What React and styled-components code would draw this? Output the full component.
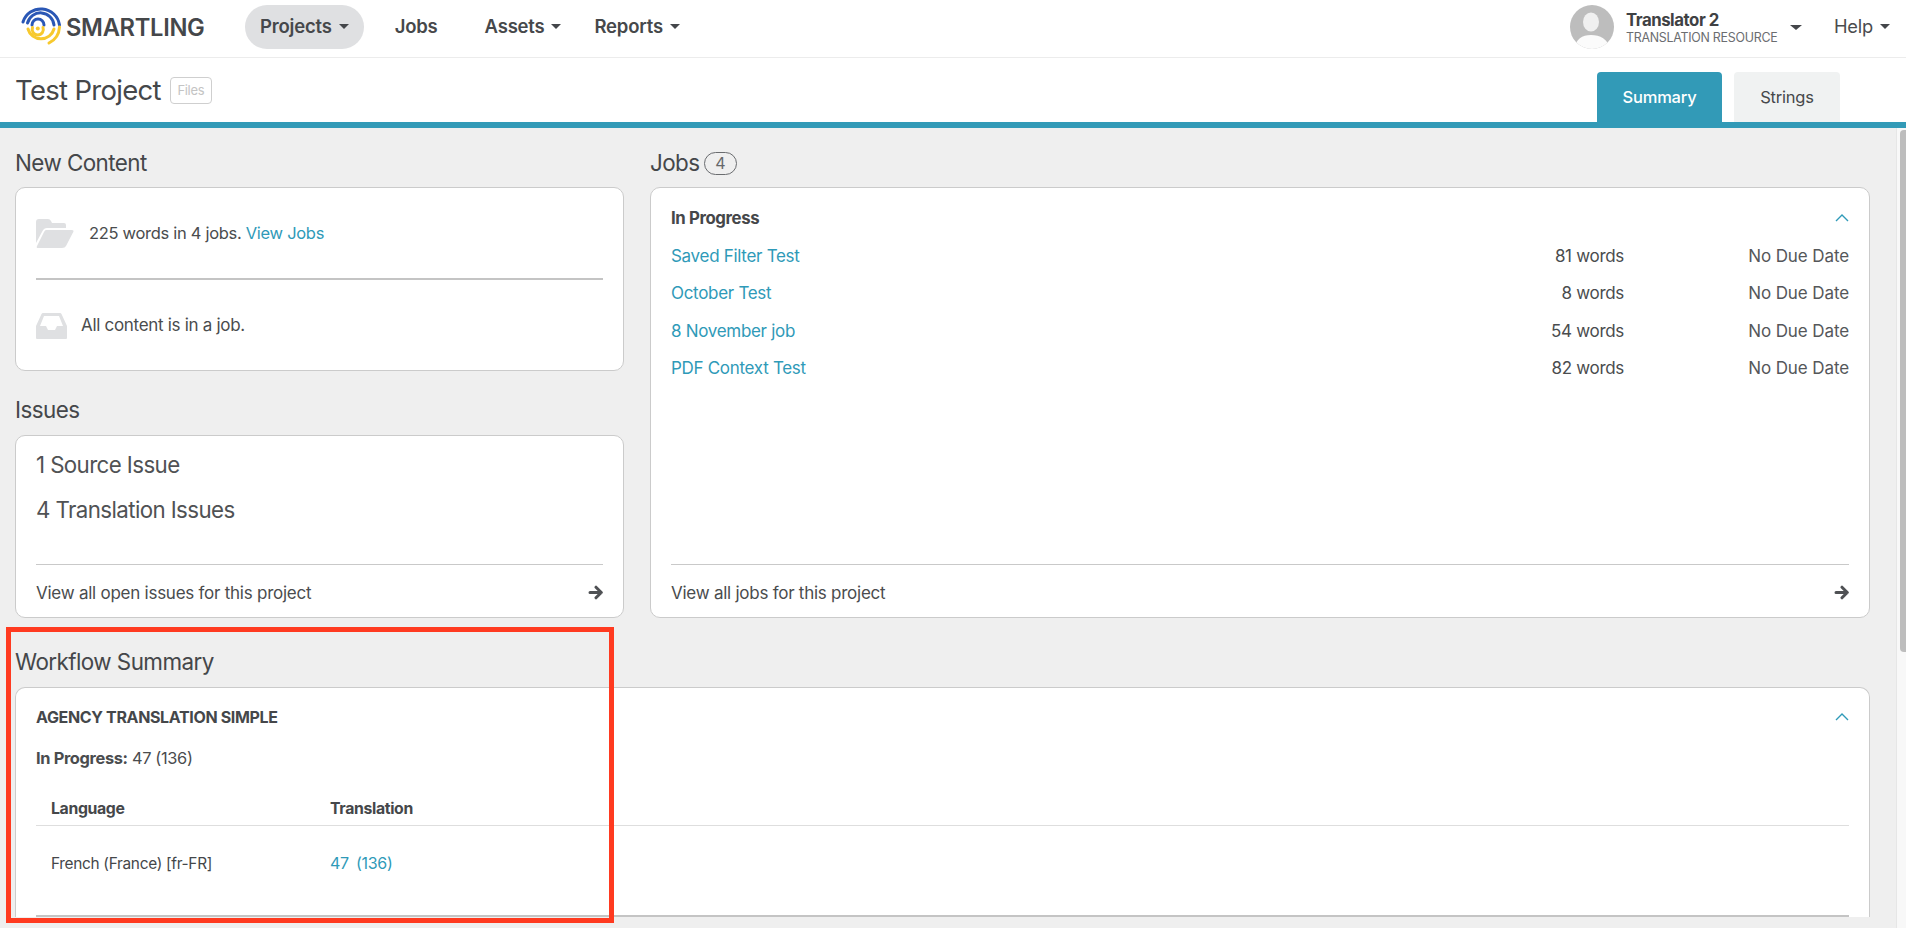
import React from "react";
import styled, { createGlobalStyle } from "styled-components";

const Global = createGlobalStyle`
  html, body { margin: 0; padding: 0; height: 100%; overflow: hidden; }
  body { font-family: "Inter", "Liberation Sans", sans-serif; color: #4a4c4e; background: #efefef; }
  * { box-sizing: border-box; }
`;

const Page = styled.div`
  position: relative; height: 928px; display: flex; flex-direction: column; overflow: hidden;
`;
const Nav = styled.header`
  flex: none; height: 58px; background: #fff; border-bottom: 1px solid #ececec;
  display: flex; align-items: flex-start; padding: 5px 16px 0 18px;
`;
const LogoWrap = styled.div`display: flex; align-items: center; height: 44px; width: 227px;`;
const LogoText = styled.span`font-size: 23.7px; font-weight: 600; color: #45474a; margin-left: -2px; letter-spacing: -0.3px;`;
const NavItem = styled.a`
  display: flex; align-items: center; height: 44px; border-radius: 22px;
  font-size: 18.5px; font-weight: 600; letter-spacing: -0.2px; color: #46484b;
  padding: 0 ${p => p.$pad ?? 0}px 2px; margin-right: ${p => p.$mr ?? 0}px;
  background: ${p => (p.$active ? "#dfe0e2" : "transparent")};
`;
const Caret = styled.i`
  display: inline-block; width: 0; height: 0; margin-left: ${p => p.$ml ?? 7}px;
  border-left: ${p => p.$s ?? 5}px solid transparent; border-right: ${p => p.$s ?? 5}px solid transparent;
  border-top: ${p => (p.$s ? p.$s - 1 : 5)}px solid #44464a;
`;
const Spacer = styled.div`flex: 1;`;
const Avatar = styled.div`
  width: 44px; height: 44px; border-radius: 50%; overflow: hidden; margin-right: 12px; flex: none;
`;
const UserBlock = styled.div`display: flex; flex-direction: column; height: 44px; justify-content: center; width: 164px;`;
const UserName = styled.div`font-size: 16.8px; font-weight: 700; line-height: 20px; letter-spacing: -0.45px; color: #3f4144;`;
const UserRole = styled.div`font-size: 12.4px; line-height: 15px; color: #6b6d70; letter-spacing: -0.25px;`;
const UserCaret = styled.div`display: flex; align-items: center; height: 44px; margin-right: 32px;`;
const Help = styled.a`display: flex; align-items: center; height: 44px; padding-bottom: 2px; font-size: 18.3px; color: #4a4c4e; letter-spacing: -0.2px;`;

const SubHeader = styled.div`
  flex: none; height: 70px; background: #fff; border-bottom: 6px solid #329ab7;
  display: flex; align-items: flex-end; padding: 0 66px 0 15px;
`;
const TitleRow = styled.div`display: flex; align-items: center; height: 64px; flex: 1;`;
const PageTitle = styled.h1`margin: 0; font-size: 27.5px; font-weight: 400; letter-spacing: -0.7px; color: #45474a; line-height: 64px;`;
const FilesTag = styled.span`
  margin-left: 9px; width: 42px; height: 27px; border: 1px solid #cfcfcf; border-radius: 4px;
  display: flex; align-items: center; justify-content: center; font-size: 13px; color: #c4c4c4; letter-spacing: -0.3px;
`;
const Tab = styled.a`
  display: flex; align-items: center; justify-content: center; height: 50px; width: ${p => p.$w}px;
  margin-left: ${p => p.$ml ?? 0}px; border-radius: 4px 4px 0 0; font-size: 16.5px; letter-spacing: -0.2px;
  background: ${p => (p.$active ? "#329ab7" : "#f0f2f2")};
  color: ${p => (p.$active ? "#fff" : "#46484b")};
  font-weight: ${p => (p.$active ? 500 : 400)};
`;

const Body = styled.div`flex: 1; min-height: 0; display: flex;`;
const Main = styled.main`flex: 1; min-width: 0; padding: 21px 26px 0 15px; overflow: hidden;`;
const Track = styled.div`flex: none; width: 10px; background: #f8f8f8; border-left: 1px solid #e6e6e6; padding-left: 3px;`;
const Thumb = styled.div`height: 522px; margin-top: 2px; background: #bdbdbd; border-radius: 4px 0 0 4px;`;

const Columns = styled.div`display: grid; grid-template-columns: 609px 1fr; column-gap: 26px;`;
const Stack = styled.div`display: flex; flex-direction: column;`;
const SectionTitle = styled.h2`
  margin: ${p => p.$mt ?? 0}px 0 ${p => p.$mb ?? 10}px; font-size: 22.4px; font-weight: 400; line-height: 28px;
  letter-spacing: -0.55px; color: #45474a; display: flex; align-items: center;
`;
const CountPill = styled.span`
  margin-left: 4px; width: 33px; height: 23px; border: 1px solid #6a6c6f; border-radius: 12px;
  display: flex; align-items: center; justify-content: center; font-size: 16px; color: #66686b;
`;
const Card = styled.section`
  background: #fff; border: 1px solid #cbcbcb; border-radius: 10px; padding: 0 20px;
  height: ${p => p.$h}px; display: flex; flex-direction: column;
`;
const InfoRow = styled.div`
  display: flex; align-items: center; height: ${p => p.$h}px; font-size: ${p => p.$fs ?? 17}px; letter-spacing: -0.3px; color: #4a4c4e;
`;
const IconCell = styled.span`display: flex; color: #dfe0e2; margin-right: ${p => p.$mr}px;`;
const Link = styled.a`color: #2f9ab8;`;
const HeavyRule = styled.hr`flex: none; width: 100%; margin: 0; border: 0; height: 2px; background: #c4c4c4;`;
const ThinRule = styled.hr`flex: none; width: 100%; margin: 0; border: 0; height: 1px; background: ${p => p.$c ?? "#c9c9c9"};`;
const IssueList = styled.div`padding-top: 7px;`;
const IssueLine = styled.div`font-size: 22.3px; line-height: 44.5px; letter-spacing: -0.6px; color: #505254;`;
const Grow = styled.div`flex: 1;`;
const CardFooter = styled.div`
  flex: none; height: 52px; padding-top: 3px; display: flex; align-items: center; justify-content: space-between;
  font-size: 17px; letter-spacing: -0.25px; color: #4a4c4e;
`;
const Heading = styled.div`
  display: flex; align-items: center; justify-content: space-between; height: 20px; margin-top: ${p => p.$mt}px;
  font-size: ${p => p.$fs ?? 16.8}px; font-weight: 700; color: #45474a; letter-spacing: ${p => p.$ls ?? -0.4}px;
`;
const JobList = styled.div`margin-top: 9px;`;
const JobRow = styled.div`
  display: grid; grid-template-columns: 1fr 130px 225px; height: 37.5px; align-items: center;
  font-size: 17px; letter-spacing: -0.3px;
`;
const JobWords = styled.span`text-align: right;`;
const JobDue = styled.span`text-align: right; color: #55575a; letter-spacing: -0.1px;`;
const WorkflowCard = styled.section`
  background: #fff; border: 1px solid #cbcbcb; border-bottom: 0; border-radius: 10px 10px 0 0;
  padding: 0 20px; flex: 1;
`;
const Progress = styled.div`margin-top: 21px; height: 20px; line-height: 20px; font-size: 16.4px; letter-spacing: -0.35px; color: #4a4c4e;`;
const ProgressLabel = styled.b`font-weight: 700;`;
const TableHead = styled.div`
  display: grid; grid-template-columns: 279px 1fr; padding-left: 15px; align-items: center; height: 34px; margin-top: 23px;
  font-size: 15.8px; letter-spacing: -0.35px; font-weight: 700; color: #45474a;
`;
const TableRow = styled.div`
  display: grid; grid-template-columns: 279px 1fr; padding-left: 15px; align-items: center; height: 74px;
  font-size: 15.4px; letter-spacing: -0.3px; color: #45474a; margin-bottom: 15px;
`;
const CellLink = styled.a`color: #2f9ab8; font-size: 16px; word-spacing: 3px;`;

const Annotation = styled.div`
  position: absolute; left: 6px; top: 627px; width: 608px; height: 296px;
  border: 5px solid #ff3a20; pointer-events: none;
`;

const Logo = () => (
  <svg width="50" height="48" viewBox="0 1 50 48" fill="none" strokeLinecap="round" style={{ flex: "none" }}>
    <g stroke="#2a57b5" strokeWidth="3">
      <path d="M5 20A18.8 18.8 0 0 1 41.5 23" />
      <path d="M9.5 21A13.5 13.5 0 0 1 36 23" />
      <path d="M14 23A6 6 0 0 1 26 23" />
    </g>
    <g stroke="#f7c92e" strokeWidth="3">
      <path d="M14.5 25.5A5.6 5.6 0 1 0 25 25.5" />
      <path d="M10 27A13.5 13.5 0 0 0 36 27" />
      <path d="M41.5 25A19 19 0 0 1 31 41" />
    </g>
    <circle cx="19.8" cy="26.5" r="2" fill="#f7c92e" />
  </svg>
);
const AvatarArt = () => (
  <svg width="44" height="44" viewBox="0 0 44 44">
    <rect width="44" height="44" fill="#bdbdbd" />
    <ellipse cx="21" cy="17" rx="8" ry="9.5" fill="#f0f0f0" />
    <path d="M4 44c2-10 8-14 17-14s17 4 19 14z" fill="#fbfbfb" />
  </svg>
);
const FolderIcon = () => (
  <svg width="38" height="29" viewBox="0 0 38 29" fill="currentColor">
    <path d="M0 3Q0 0 3 0H12Q14 0 15 2L16 4H28Q30 4 30 6V9H11Q8 9 6.5 12L0 24Z" />
    <path d="M10 11H36Q38 11 37.5 12.5L30 27Q29 29 26 29H2Q0 29 1 27L8 13Q9 11 10 11Z" />
  </svg>
);
const InboxIcon = () => (
  <svg width="31" height="27" viewBox="0 0 31 27" fill="currentColor">
    <path fillRule="evenodd" d="M7 1H24Q25 1 25.5 2L31 14V26Q31 27 30 27H1Q0 27 0 26V14L5.5 2Q6 1 7 1ZM8 4 4 14H10L12 18H19L21 14H27L23 4Z" />
  </svg>
);
const Chevron = () => (
  <svg width="14" height="8" viewBox="0 0 14 8" fill="none" stroke="#2f9ab8" strokeWidth="1.4"><path d="M1 7l6-6 6 6" /></svg>
);
const Arrow = () => (
  <svg width="15" height="15" viewBox="0 0 15 15" fill="none" stroke="#4f5154" strokeWidth="3" strokeLinecap="round" strokeLinejoin="round">
    <path d="M2 7.5H13M8 2.2 13.3 7.5 8 12.8" />
  </svg>
);

const jobs = [
  ["Saved Filter Test", "81 words"],
  ["October Test", "8 words"],
  ["8 November job", "54 words"],
  ["PDF Context Test", "82 words"],
];

export default function App() {
  return (
    <Page>
      <Global />
      <Nav>
        <LogoWrap><Logo /><LogoText>SMARTLING</LogoText></LogoWrap>
        <NavItem $active $pad={15} $mr={31}>Projects<Caret /></NavItem>
        <NavItem $mr={47}>Jobs</NavItem>
        <NavItem $mr={33}>Assets<Caret /></NavItem>
        <NavItem>Reports<Caret /></NavItem>
        <Spacer />
        <Avatar><AvatarArt /></Avatar>
        <UserBlock>
          <UserName>Translator 2</UserName>
          <UserRole>TRANSLATION RESOURCE</UserRole>
        </UserBlock>
        <UserCaret><Caret $s={6} $ml={0} /></UserCaret>
        <Help>Help<Caret /></Help>
      </Nav>
      <SubHeader>
        <TitleRow>
          <PageTitle>Test Project</PageTitle>
          <FilesTag>Files</FilesTag>
        </TitleRow>
        <Tab $active $w={125}>Summary</Tab>
        <Tab $w={106} $ml={12}>Strings</Tab>
      </SubHeader>
      <Body>
        <Main>
          <Columns>
            <Stack>
              <SectionTitle>New Content</SectionTitle>
              <Card $h={184}>
                <InfoRow $h={91} $fs={16.5}>
                  <IconCell $mr={15}><FolderIcon /></IconCell>
                  <span>225 words in 4 jobs. <Link>View Jobs</Link></span>
                </InfoRow>
                <HeavyRule />
                <InfoRow $h={91}>
                  <IconCell $mr={14}><InboxIcon /></IconCell>
                  <span>All content is in a job.</span>
                </InfoRow>
              </Card>
              <SectionTitle $mt={25} $mb={11}>Issues</SectionTitle>
              <Card $h={183}>
                <IssueList>
                  <IssueLine>1 Source Issue</IssueLine>
                  <IssueLine>4 Translation Issues</IssueLine>
                </IssueList>
                <Grow />
                <ThinRule />
                <CardFooter>View all open issues for this project<Arrow /></CardFooter>
              </Card>
            </Stack>
            <Stack>
              <SectionTitle>Jobs<CountPill>4</CountPill></SectionTitle>
              <Card $h={431}>
                <Heading $mt={20}>In Progress<Chevron /></Heading>
                <JobList>
                  {jobs.map(([name, words]) => (
                    <JobRow key={name}>
                      <Link>{name}</Link>
                      <JobWords>{words}</JobWords>
                      <JobDue>No Due Date</JobDue>
                    </JobRow>
                  ))}
                </JobList>
                <Grow />
                <ThinRule />
                <CardFooter>View all jobs for this project<Arrow /></CardFooter>
              </Card>
            </Stack>
          </Columns>
          <SectionTitle $mt={30} $mb={11}>Workflow Summary</SectionTitle>
          <WorkflowCard>
            <Heading $mt={19} $fs={16} $ls={-0.35}>AGENCY TRANSLATION SIMPLE<Chevron /></Heading>
            <Progress><ProgressLabel>In Progress:</ProgressLabel> 47 (136)</Progress>
            <TableHead><span>Language</span><span>Translation</span></TableHead>
            <ThinRule $c="#dedede" />
            <TableRow>
              <span>French (France) [fr-FR]</span>
              <CellLink>47 (136)</CellLink>
            </TableRow>
            <HeavyRule />
          </WorkflowCard>
        </Main>
        <Track><Thumb /></Track>
      </Body>
      <Annotation />
    </Page>
  );
}
